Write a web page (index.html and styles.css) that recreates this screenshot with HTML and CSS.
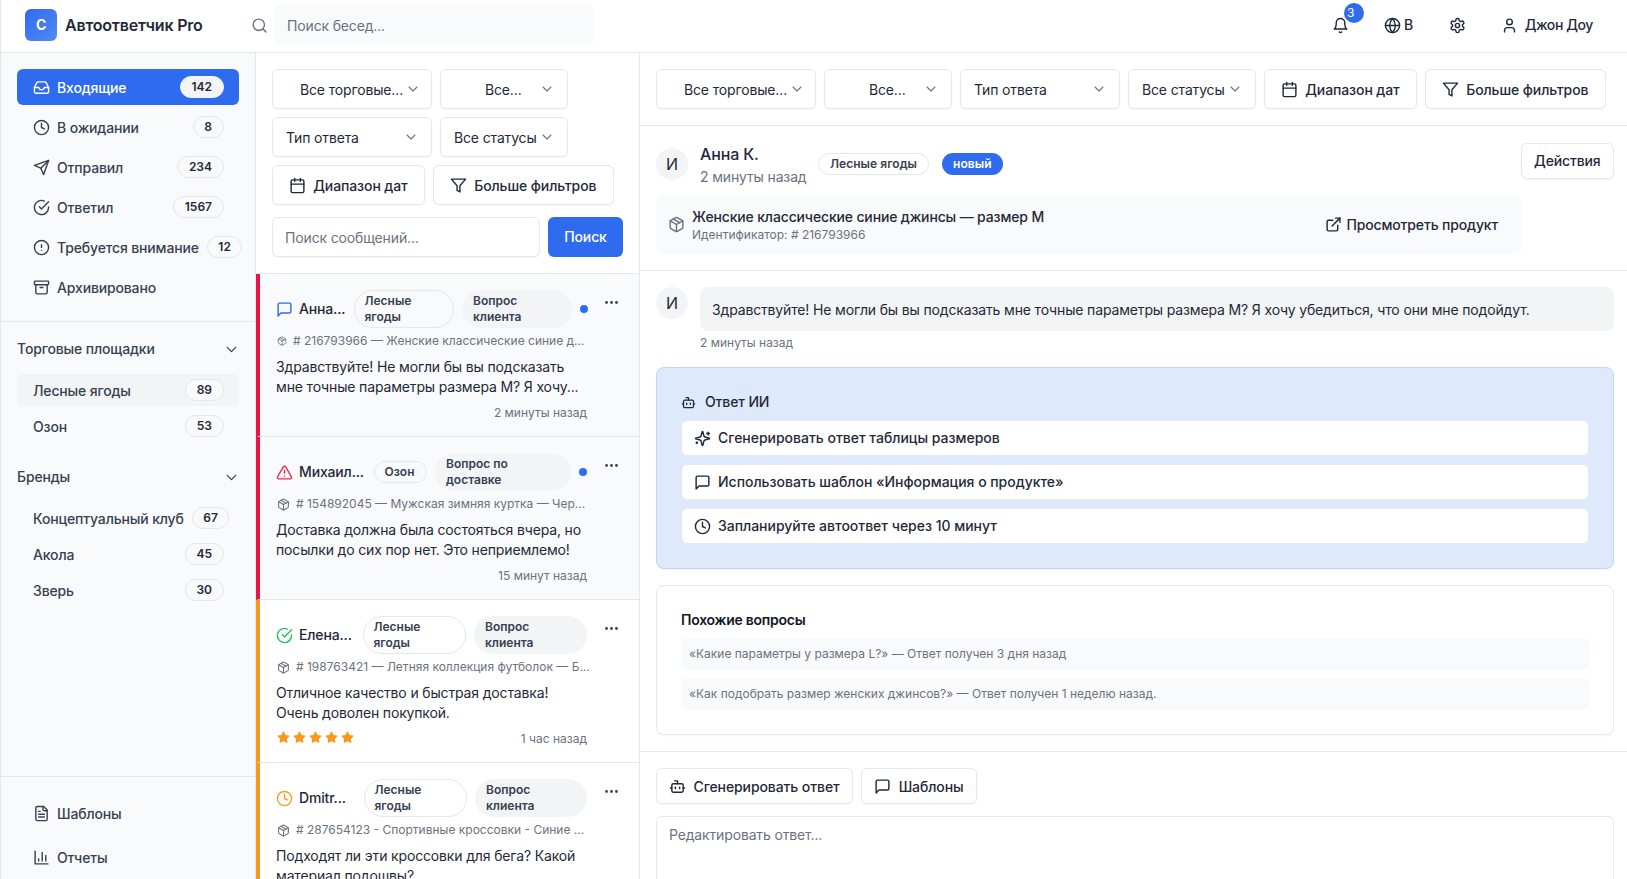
FILE: index.html
```html
<!DOCTYPE html>
<html lang="ru">
<head>
<meta charset="utf-8">
<title>Автоответчик Pro</title>
<link rel="stylesheet" href="styles.css">
</head>
<body>
<svg class="defs" xmlns="http://www.w3.org/2000/svg">
  <defs>
    <symbol id="i-inbox" viewBox="0 0 24 24"><polyline points="22 12 16 12 14 15 10 15 8 12 2 12"/><path d="M5.45 5.11 2 12v6a2 2 0 0 0 2 2h16a2 2 0 0 0 2-2v-6l-3.45-6.89A2 2 0 0 0 16.76 4H7.24a2 2 0 0 0-1.79 1.11z"/></symbol>
    <symbol id="i-clock" viewBox="0 0 24 24"><circle cx="12" cy="12" r="10"/><polyline points="12 6 12 12 16 14"/></symbol>
    <symbol id="i-send" viewBox="0 0 24 24"><path d="m22 2-7 20-4-9-9-4Z"/><path d="M22 2 11 13"/></symbol>
    <symbol id="i-check" viewBox="0 0 24 24"><path d="M22 11.08V12a10 10 0 1 1-5.93-9.14"/><path d="m9 11 3 3L22 4"/></symbol>
    <symbol id="i-alert" viewBox="0 0 24 24"><circle cx="12" cy="12" r="10"/><path d="M12 8v4"/><path d="M12 16h.01"/></symbol>
    <symbol id="i-archive" viewBox="0 0 24 24"><rect x="2" y="3" width="20" height="5" rx="1"/><path d="M4 8v11a2 2 0 0 0 2 2h12a2 2 0 0 0 2-2V8"/><path d="M10 12h4"/></symbol>
    <symbol id="i-search" viewBox="0 0 24 24"><circle cx="11" cy="11" r="8"/><path d="m21 21-4.3-4.3"/></symbol>
    <symbol id="i-bell" viewBox="0 0 24 24"><path d="M6 8a6 6 0 0 1 12 0c0 7 3 9 3 9H3s3-2 3-9"/><path d="M10.3 21a1.94 1.94 0 0 0 3.4 0"/></symbol>
    <symbol id="i-globe" viewBox="0 0 24 24"><circle cx="12" cy="12" r="10"/><path d="M12 2a14.5 14.5 0 0 0 0 20 14.5 14.5 0 0 0 0-20"/><path d="M2 12h20"/></symbol>
    <symbol id="i-gear" viewBox="0 0 24 24"><path d="M12.22 2h-.44a2 2 0 0 0-2 2v.18a2 2 0 0 1-1 1.73l-.43.25a2 2 0 0 1-2 0l-.15-.08a2 2 0 0 0-2.73.73l-.22.38a2 2 0 0 0 .73 2.73l.15.1a2 2 0 0 1 1 1.72v.51a2 2 0 0 1-1 1.74l-.15.09a2 2 0 0 0-.73 2.73l.22.38a2 2 0 0 0 2.73.73l.15-.08a2 2 0 0 1 2 0l.43.25a2 2 0 0 1 1 1.73V20a2 2 0 0 0 2 2h.44a2 2 0 0 0 2-2v-.18a2 2 0 0 1 1-1.73l.43-.25a2 2 0 0 1 2 0l.15.08a2 2 0 0 0 2.73-.73l.22-.39a2 2 0 0 0-.73-2.73l-.15-.08a2 2 0 0 1-1-1.74v-.5a2 2 0 0 1 1-1.74l.15-.09a2 2 0 0 0 .73-2.73l-.22-.38a2 2 0 0 0-2.73-.73l-.15.08a2 2 0 0 1-2 0l-.43-.25a2 2 0 0 1-1-1.73V4a2 2 0 0 0-2-2z"/><circle cx="12" cy="12" r="3"/></symbol>
    <symbol id="i-user" viewBox="0 0 24 24"><path d="M19 21v-2a4 4 0 0 0-4-4H9a4 4 0 0 0-4 4v2"/><circle cx="12" cy="7" r="4"/></symbol>
    <symbol id="i-cal" viewBox="0 0 24 24"><rect x="3" y="4" width="18" height="18" rx="2"/><path d="M16 2v4"/><path d="M8 2v4"/><path d="M3 10h18"/></symbol>
    <symbol id="i-filter" viewBox="0 0 24 24"><polygon points="22 3 2 3 10 12.46 10 19 14 21 14 12.46 22 3"/></symbol>
    <symbol id="i-chev" viewBox="0 0 24 24"><path d="m6 9 6 6 6-6"/></symbol>
    <symbol id="i-msg" viewBox="0 0 24 24"><path d="M21 15a2 2 0 0 1-2 2H7l-4 4V5a2 2 0 0 1 2-2h14a2 2 0 0 1 2 2z"/></symbol>
    <symbol id="i-tri" viewBox="0 0 24 24"><path d="m21.73 18-8-14a2 2 0 0 0-3.48 0l-8 14A2 2 0 0 0 4 21h16a2 2 0 0 0 1.73-3"/><path d="M12 9v4"/><path d="M12 17h.01"/></symbol>
    <symbol id="i-pkg" viewBox="0 0 24 24"><path d="m7.5 4.27 9 5.15"/><path d="M21 8a2 2 0 0 0-1-1.73l-7-4a2 2 0 0 0-2 0l-7 4A2 2 0 0 0 3 8v8a2 2 0 0 0 1 1.73l7 4a2 2 0 0 0 2 0l7-4A2 2 0 0 0 21 16Z"/><path d="m3.3 7 8.7 5 8.7-5"/><path d="M12 22V12"/></symbol>
    <symbol id="i-more" viewBox="0 0 24 24"><circle cx="12" cy="12" r="1"/><circle cx="19" cy="12" r="1"/><circle cx="5" cy="12" r="1"/></symbol>
    <symbol id="i-star" viewBox="0 0 24 24"><polygon points="12 2 15.09 8.26 22 9.27 17 14.14 18.18 21.02 12 17.77 5.82 21.02 7 14.14 2 9.27 8.91 8.26 12 2"/></symbol>
    <symbol id="i-file" viewBox="0 0 24 24"><path d="M15 2H6a2 2 0 0 0-2 2v16a2 2 0 0 0 2 2h12a2 2 0 0 0 2-2V7Z"/><path d="M14 2v4a2 2 0 0 0 2 2h4"/><path d="M10 9H8"/><path d="M16 13H8"/><path d="M16 17H8"/></symbol>
    <symbol id="i-chart" viewBox="0 0 24 24"><path d="M3 3v18h18"/><path d="M18 17V9"/><path d="M13 17V5"/><path d="M8 17v-3"/></symbol>
    <symbol id="i-ext" viewBox="0 0 24 24"><path d="M18 13v6a2 2 0 0 1-2 2H5a2 2 0 0 1-2-2V8a2 2 0 0 1 2-2h6"/><path d="M15 3h6v6"/><path d="M10 14 21 3"/></symbol>
    <symbol id="i-bot" viewBox="0 0 24 24"><path d="M12 8V4H8"/><rect x="4" y="8" width="16" height="12" rx="2"/><path d="M2 14h2"/><path d="M20 14h2"/><path d="M15 13v2"/><path d="M9 13v2"/></symbol>
    <symbol id="i-spark" viewBox="0 0 24 24"><path d="M9.937 15.5A2 2 0 0 0 8.5 14.063l-6.135-1.582a.5.5 0 0 1 0-.962L8.5 9.936A2 2 0 0 0 9.937 8.5l1.582-6.135a.5.5 0 0 1 .963 0L14.063 8.5A2 2 0 0 0 15.5 9.937l6.135 1.581a.5.5 0 0 1 0 .964L15.5 14.063a2 2 0 0 0-1.437 1.437l-1.582 6.135a.5.5 0 0 1-.963 0z"/><path d="M20 3v4"/><path d="M22 5h-4"/><path d="M4 17v2"/><path d="M5 18H3"/></symbol>
  </defs>
</svg>

<div class="app">
  <header class="topbar">
    <div class="brand">
      <div class="logo">C</div>
      <span class="brand-name">Автоответчик Pro</span>
    </div>
    <div class="top-search">
      <svg class="ico ico-muted"><use href="#i-search"/></svg>
      <input class="top-input" type="text" placeholder="Поиск бесед...">
    </div>
    <div class="top-actions">
      <div class="bell">
        <svg class="ico"><use href="#i-bell"/></svg>
        <span class="bell-count">3</span>
      </div>
      <div class="lang"><svg class="ico"><use href="#i-globe"/></svg><span>В</span></div>
      <svg class="ico gear"><use href="#i-gear"/></svg>
      <div class="me"><svg class="ico"><use href="#i-user"/></svg><span>Джон Доу</span></div>
    </div>
  </header>

  <div class="body">
    <aside class="sidebar">
      <nav class="nav">
        <a class="nav-item active"><svg class="ico"><use href="#i-inbox"/></svg><span class="nav-label">Входящие</span><span class="count count-solid">142</span></a>
        <a class="nav-item"><svg class="ico"><use href="#i-clock"/></svg><span class="nav-label">В ожидании</span><span class="count">8</span></a>
        <a class="nav-item"><svg class="ico"><use href="#i-send"/></svg><span class="nav-label">Отправил</span><span class="count">234</span></a>
        <a class="nav-item"><svg class="ico"><use href="#i-check"/></svg><span class="nav-label">Ответил</span><span class="count">1567</span></a>
        <a class="nav-item"><svg class="ico"><use href="#i-alert"/></svg><span class="nav-label">Требуется внимание</span><span class="count">12</span></a>
        <a class="nav-item"><svg class="ico"><use href="#i-archive"/></svg><span class="nav-label">Архивировано</span></a>
      </nav>

      <div class="groups">
        <div class="group">
          <div class="group-head"><span>Торговые площадки</span><svg class="ico chev-dark"><use href="#i-chev"/></svg></div>
          <a class="sub-item current"><span class="nav-label">Лесные ягоды</span><span class="count">89</span></a>
          <a class="sub-item"><span class="nav-label">Озон</span><span class="count">53</span></a>
        </div>
        <div class="group">
          <div class="group-head"><span>Бренды</span><svg class="ico chev-dark"><use href="#i-chev"/></svg></div>
          <a class="sub-item"><span class="nav-label">Концептуальный клуб</span><span class="count">67</span></a>
          <a class="sub-item"><span class="nav-label">Акола</span><span class="count">45</span></a>
          <a class="sub-item"><span class="nav-label">Зверь</span><span class="count">30</span></a>
        </div>
      </div>

      <div class="side-foot">
        <a class="nav-item"><svg class="ico"><use href="#i-file"/></svg><span class="nav-label">Шаблоны</span></a>
        <a class="nav-item"><svg class="ico"><use href="#i-chart"/></svg><span class="nav-label">Отчеты</span></a>
      </div>
    </aside>

    <section class="listcol">
      <div class="list-tools">
        <div class="filters">
          <div class="ctl sel w160 pad-a"><span>Все торговые...</span><svg class="chev"><use href="#i-chev"/></svg></div>
          <div class="ctl sel w128 pad-b"><span>Все...</span><svg class="chev"><use href="#i-chev"/></svg></div>
          <div class="ctl sel w160"><span>Тип ответа</span><svg class="chev"><use href="#i-chev"/></svg></div>
          <div class="ctl sel w128"><span>Все статусы</span><svg class="chev"><use href="#i-chev"/></svg></div>
          <div class="ctl btn"><svg class="ico"><use href="#i-cal"/></svg><span>Диапазон дат</span></div>
          <div class="ctl btn"><svg class="ico"><use href="#i-filter"/></svg><span>Больше фильтров</span></div>
        </div>
        <div class="msg-search">
          <input class="ctl msg-input" type="text" placeholder="Поиск сообщений...">
          <button class="search-btn" type="button">Поиск</button>
        </div>
      </div>

      <div class="cards">
        <article class="card urgent tinted">
          <div class="card-main">
            <div class="card-top">
              <svg class="ico ico-blue"><use href="#i-msg"/></svg>
              <span class="who n47">Анна...</span>
              <span class="tag tag-line b100">Лесные ягоды</span>
              <span class="tag tag-soft b110">Вопрос клиента</span>
              <span class="dot"></span>
            </div>
            <div class="prod"><svg class="ico-xs tiny"><use href="#i-pkg"/></svg><span class="prod-text"># 216793966 — Женские классические синие д...</span></div>
            <p class="text">Здравствуйте! Не могли бы вы подсказать мне точные параметры размера М? Я хочу...</p>
            <div class="card-foot"><span class="ago">2 минуты назад</span></div>
          </div>
          <button class="more" type="button" aria-label="Ещё"><svg class="ico"><use href="#i-more"/></svg></button>
        </article>

        <article class="card urgent tinted">
          <div class="card-main">
            <div class="card-top">
              <svg class="ico ico-red"><use href="#i-tri"/></svg>
              <span class="who n67">Михаил...</span>
              <span class="tag tag-line b53">Озон</span>
              <span class="tag tag-soft b136">Вопрос по доставке</span>
              <span class="dot"></span>
            </div>
            <div class="prod"><svg class="ico-xs"><use href="#i-pkg"/></svg><span class="prod-text"># 154892045 — Мужская зимняя куртка — Чер...</span></div>
            <p class="text">Доставка должна была состояться вчера, но посылки до сих пор нет. Это неприемлемо!</p>
            <div class="card-foot"><span class="ago">15 минут назад</span></div>
          </div>
          <button class="more" type="button" aria-label="Ещё"><svg class="ico"><use href="#i-more"/></svg></button>
        </article>

        <article class="card warn">
          <div class="card-main">
            <div class="card-top">
              <svg class="ico ico-green"><use href="#i-check"/></svg>
              <span class="who n56">Елена...</span>
              <span class="tag tag-line b103">Лесные ягоды</span>
              <span class="tag tag-soft b113">Вопрос клиента</span>
            </div>
            <div class="prod"><svg class="ico-xs"><use href="#i-pkg"/></svg><span class="prod-text"># 198763421 — Летняя коллекция футболок — Б...</span></div>
            <p class="text">Отличное качество и быстрая доставка!<br>Очень доволен покупкой.</p>
            <div class="card-foot">
              <div class="stars">
                <svg class="star"><use href="#i-star"/></svg><svg class="star"><use href="#i-star"/></svg><svg class="star"><use href="#i-star"/></svg><svg class="star"><use href="#i-star"/></svg><svg class="star"><use href="#i-star"/></svg>
              </div>
              <span class="ago">1 час назад</span>
            </div>
          </div>
          <button class="more" type="button" aria-label="Ещё"><svg class="ico"><use href="#i-more"/></svg></button>
        </article>

        <article class="card warn">
          <div class="card-main">
            <div class="card-top">
              <svg class="ico ico-orange"><use href="#i-clock"/></svg>
              <span class="who n57">Dmitr...</span>
              <span class="tag tag-line b103">Лесные ягоды</span>
              <span class="tag tag-soft b112">Вопрос клиента</span>
            </div>
            <div class="prod"><svg class="ico-xs"><use href="#i-pkg"/></svg><span class="prod-text"># 287654123 - Спортивные кроссовки - Синие ...</span></div>
            <p class="text">Подходят ли эти кроссовки для бега? Какой материал подошвы?</p>
          </div>
          <button class="more" type="button" aria-label="Ещё"><svg class="ico"><use href="#i-more"/></svg></button>
        </article>
      </div>
    </section>

    <main class="detail">
      <div class="detail-filters">
        <div class="ctl sel w160 pad-a"><span>Все торговые...</span><svg class="chev"><use href="#i-chev"/></svg></div>
        <div class="ctl sel w128 pad-b"><span>Все...</span><svg class="chev"><use href="#i-chev"/></svg></div>
        <div class="ctl sel w160"><span>Тип ответа</span><svg class="chev"><use href="#i-chev"/></svg></div>
        <div class="ctl sel w128"><span>Все статусы</span><svg class="chev"><use href="#i-chev"/></svg></div>
        <div class="ctl btn"><svg class="ico"><use href="#i-cal"/></svg><span>Диапазон дат</span></div>
        <div class="ctl btn"><svg class="ico"><use href="#i-filter"/></svg><span>Больше фильтров</span></div>
      </div>

      <div class="convo-head">
        <div class="convo-top">
          <div class="avatar">И</div>
          <div class="convo-who">
            <div class="convo-name">Анна К.</div>
            <div class="convo-ago">2 минуты назад</div>
          </div>
          <span class="tag tag-line">Лесные ягоды</span>
          <span class="tag tag-blue">новый</span>
          <button class="ctl action" type="button">Действия</button>
        </div>
        <div class="product">
          <svg class="ico ico-gray"><use href="#i-pkg"/></svg>
          <div class="product-info">
            <div class="product-name">Женские классические синие джинсы — размер М</div>
            <div class="product-id">Идентификатор: # 216793966</div>
          </div>
          <a class="product-link"><svg class="ico"><use href="#i-ext"/></svg><span>Просмотреть продукт</span></a>
        </div>
      </div>

      <div class="thread">
        <div class="message">
          <div class="avatar">И</div>
          <div class="message-body">
            <div class="bubble">Здравствуйте! Не могли бы вы подсказать мне точные параметры размера М? Я хочу убедиться, что они мне подойдут.</div>
            <div class="message-ago">2 минуты назад</div>
          </div>
        </div>

        <div class="panel panel-ai">
          <div class="panel-title"><svg class="ico ico-14"><use href="#i-bot"/></svg><span>Ответ ИИ</span></div>
          <button class="ai-opt" type="button"><svg class="ico"><use href="#i-spark"/></svg><span>Сгенерировать ответ таблицы размеров</span></button>
          <button class="ai-opt" type="button"><svg class="ico"><use href="#i-msg"/></svg><span>Использовать шаблон «Информация о продукте»</span></button>
          <button class="ai-opt" type="button"><svg class="ico"><use href="#i-clock"/></svg><span>Запланируйте автоответ через 10 минут</span></button>
        </div>

        <div class="panel panel-similar">
          <div class="panel-title strong"><span>Похожие вопросы</span></div>
          <div class="similar">«Какие параметры у размера L?» — Ответ получен 3 дня назад</div>
          <div class="similar">«Как подобрать размер женских джинсов?» — Ответ получен 1 неделю назад.</div>
        </div>
      </div>

      <div class="composer">
        <div class="composer-btns">
          <button class="ctl btn" type="button"><svg class="ico"><use href="#i-bot"/></svg><span>Сгенерировать ответ</span></button>
          <button class="ctl btn" type="button"><svg class="ico"><use href="#i-msg"/></svg><span>Шаблоны</span></button>
        </div>
        <textarea class="reply" placeholder="Редактировать ответ..."></textarea>
      </div>
    </main>
  </div>
</div>
</body>
</html>
```
FILE: styles.css
```css
* { box-sizing: border-box; }
html, body { margin: 0; height: 100%; overflow: hidden; }
body {
  font-family: Inter, "Noto Sans", sans-serif;
  font-size: 14px;
  line-height: 20px;
  letter-spacing: -0.15px;
  color: #1f2937;
  background: #fff;
}
.defs { position: absolute; width: 0; height: 0; }
button, input, textarea { font: inherit; color: inherit; letter-spacing: inherit; }
p { margin: 0; }

.ico {
  width: 17px; height: 17px; margin: 0 -0.5px; flex: none;
  fill: none; stroke: currentColor; stroke-width: 2; stroke-linecap: round; stroke-linejoin: round;
}
.ico-14 { width: 15px; height: 15px; margin: 0 1px 0 0; }
.ico-muted { color: #6b7280; }
.ico-gray { color: #6b7280; }
.ico-blue { color: #2f6bef; }
.ico-red { color: #ef2b4f; }
.ico-green { color: #22c55e; }
.ico-orange { color: #f59e2b; }

.app { height: 100vh; display: flex; flex-direction: column; border-left: 1px solid #e5e7eb; }

/* top bar */
.topbar {
  height: 53px; flex: none; display: flex; align-items: center;
  border-bottom: 1px solid #e5e7eb; padding: 0 34px 2px 24px; background: #fff;
}
.brand { display: flex; align-items: center; gap: 8px; width: 226px; flex: none; }
.logo {
  width: 32px; height: 32px; border-radius: 6px; color: #fff; font-weight: 700; font-size: 14px;
  display: flex; align-items: center; justify-content: center;
  background: linear-gradient(135deg, #2f6bef, #5389f3);
}
.brand-name { font-size: 16px; font-weight: 600; color: #1f2937; letter-spacing: -0.2px; }
.top-search { display: flex; align-items: center; gap: 8px; width: 343px; flex: none; }
.top-input {
  flex: 1; min-width: 0; height: 40px; border: 0; border-radius: 6px; background: #f9fafb;
  padding: 0 12px; outline: none;
}
.top-input::placeholder, .msg-input::placeholder, .reply::placeholder { color: #6b7280; opacity: 1; }
.top-actions { margin-left: auto; display: flex; align-items: center; }
.bell { position: relative; display: flex; margin-right: 36px; }
.bell-count {
  position: absolute; left: 12px; top: -14px; width: 20px; height: 20px; border-radius: 50%;
  background: #2f6bef; color: #fff; font-size: 12px; line-height: 20px; padding-left: 3px; letter-spacing: 0;
}
.lang { display: flex; align-items: center; gap: 4px; font-weight: 500; margin-right: 36px; }
.gear { margin-right: 36px; }
.me { display: flex; align-items: center; gap: 7px; font-weight: 500; letter-spacing: -0.4px; }

.body { flex: 1; min-height: 0; display: flex; }

/* sidebar */
.sidebar {
  width: 255px; flex: none; display: flex; flex-direction: column;
  background: #f9fafb; border-right: 1px solid #e5e7eb; overflow: hidden;
}
.nav {
  display: flex; flex-direction: column; gap: 4px; padding: 16px;
  border-bottom: 1px solid #e5e7eb;
}
.nav-item {
  height: 36px; flex: none; display: flex; align-items: center; gap: 8px; padding: 0 15.5px 0 16px;
  border-radius: 6px; color: #374151; font-weight: 500; white-space: nowrap;
}
.nav-item.active { background: #2f6bef; color: #fff; }
.nav-label { flex: 1 0 auto; padding-top: 1px; }
.count {
  height: 22px; flex: none; display: inline-flex; align-items: center; padding: 0 10.5px;
  border: 1px solid #e5e7eb; border-radius: 11px; font-size: 12px; font-weight: 600; color: #1f2937;
  background: #f9fafb; letter-spacing: 0;
}
.count-solid { background: #f3f4f6; border-color: #f3f4f6; }
.groups { flex: 1; display: flex; flex-direction: column; gap: 24px; padding: 16px 16px 0; }
.group-head {
  height: 22px; display: flex; align-items: center; justify-content: space-between;
  margin-bottom: 14px; font-weight: 500; color: #374151;
}
.chev-dark { stroke-width: 1.75; }
.sub-item {
  height: 32px; display: flex; align-items: center; gap: 8px; padding: 0 15.5px 0 16px; border-radius: 6px;
  color: #374151; font-weight: 500; white-space: nowrap;
}
.sub-item + .sub-item { margin-top: 4px; }
.sub-item.current { background: #f3f4f6; }
.side-foot {
  flex: none; height: 103px; display: flex; flex-direction: column; gap: 8px;
  padding: 18px 16px 0; border-top: 1px solid #e5e7eb;
}

/* list column */
.listcol {
  width: 384px; flex: none; display: flex; flex-direction: column;
  border-right: 1px solid #e5e7eb; overflow: hidden;
}
.list-tools { padding: 16px 0 16px 16px; border-bottom: 1px solid #e5e7eb; }
.filters { display: flex; flex-wrap: wrap; gap: 8px; }
.ctl {
  height: 40px; display: flex; align-items: center; background: #fff;
  border: 1px solid #e5e7eb; border-radius: 6px; box-shadow: 0 1px 2px rgba(0,0,0,.04);
  font-weight: 500; color: #1f2937;
}
.ctl > span { padding-top: 1px; }
.sel { justify-content: space-between; padding: 0 12px 0 13px; font-weight: 400; white-space: nowrap; }
.sel.pad-a { padding: 0 10px 0 27px; }
.sel.pad-b { padding-left: 44px; }
.w160 { width: 160px; }
.w128 { width: 128px; }
.chev {
  width: 16px; height: 16px; flex: none; fill: none; stroke: #6b7280; stroke-width: 1.6;
  stroke-linecap: round; stroke-linejoin: round;
}
.btn { padding: 0 16.25px; gap: 8px; white-space: nowrap; letter-spacing: -0.1px; }
.msg-search { display: flex; gap: 8px; margin-top: 12px; padding-right: 16px; }
.msg-input { flex: 1; min-width: 0; padding: 0 12px; font-weight: 400; outline: none; }
.search-btn {
  width: 75px; height: 40px; border: 0; border-radius: 6px; background: #2f6bef; color: #fff; font-weight: 500;
}

.cards { flex: 1; min-height: 0; overflow: hidden; }
.card {
  height: 163px; display: flex; align-items: flex-start; gap: 8px;
  padding: 16px 13px 0 16px; border-left: 4px solid #e11d48; border-bottom: 1px solid #e5e7eb;
}
.card.urgent { border-left-color: #eb1244; }
.card.warn { border-left-color: #f7981d; }
.card.tinted { background: #f9fafb; }
.card-main { width: 311px; flex: none; }
.card-top { min-height: 38px; display: flex; align-items: center; gap: 8px; }
.who { font-weight: 500; white-space: nowrap; margin-left: -1px; color: #1f2937; flex: none; }
.n47 { width: 47px; }
.n56 { width: 56px; }
.n57 { width: 57px; }
.n67 { width: 67px; }
.tag {
  display: inline-flex; align-items: center; padding: 2px 10px; border-radius: 999px;
  font-size: 12px; line-height: 16px; font-weight: 600; border: 1px solid transparent; flex: none; letter-spacing: 0;
}
.tag-line { border-color: #e5e7eb; background: #fff; color: #374151; }
.tag-soft { background: #f3f4f6; color: #374151; }
.tag-blue { background: #2f6bef; color: #fff; }
.card .tag-line { background: transparent; padding-left: 9.5px; }
.b53 { width: 53px; }
.b100 { width: 100px; }
.b103 { width: 103px; }
.b110 { width: 110px; }
.b112 { width: 112px; }
.b113 { width: 113px; }
.b136 { width: 136px; }
.dot { width: 8px; height: 8px; border-radius: 50%; background: #2f6bef; flex: none; }
.prod {
  display: flex; align-items: center; gap: 6px; margin-top: 5px; font-size: 12px; line-height: 16px; color: #6b7280;
  white-space: nowrap; letter-spacing: 0;
}
.ico-xs {
  width: 13px; height: 13px; flex: none; fill: none; stroke: currentColor; stroke-width: 2;
  stroke-linecap: round; stroke-linejoin: round; margin-left: 1px;
}
.ico-xs.tiny { width: 10px; height: 10px; }
.text { margin-top: 8px; width: 311px; color: #1f2937; }
.card-foot { display: flex; align-items: center; justify-content: flex-end; margin-top: 8px; height: 16px; }
.ago { font-size: 12px; line-height: 16px; color: #6b7280; letter-spacing: 0; }
.stars { display: flex; gap: 3px; margin: -3px auto 0 1px; }
.star { width: 13px; height: 13px; fill: #f7981d; stroke: #f7981d; stroke-width: 2; stroke-linejoin: round; }
.more {
  width: 32px; height: 24px; flex: none; padding: 0; border: 0; background: transparent; color: #374151;
  display: flex; align-items: center; justify-content: center;
}

/* detail */
.detail { flex: 1; min-width: 0; display: flex; flex-direction: column; overflow: hidden; }
.detail-filters {
  flex: none; display: flex; gap: 8px; padding: 16px 13px 16px 16px; border-bottom: 1px solid #e5e7eb;
}
.convo-head { flex: none; padding: 16px 13px 16px 16px; height: 145px; border-bottom: 1px solid #e5e7eb; }
.convo-top { display: flex; align-items: center; height: 44px; margin-bottom: 9px; }
.avatar {
  width: 32px; height: 32px; flex: none; border-radius: 50%; background: #f3f4f6; color: #1f2937;
  display: flex; align-items: center; justify-content: center; font-size: 16px;
}
.convo-who { margin-left: 12px; margin-right: 12px; }
.convo-name { font-size: 16px; line-height: 24px; font-weight: 500; color: #1f2937; }
.convo-ago { color: #6b7280; line-height: 20px; margin-top: 1px; }
.convo-top .tag { padding: 2px 10.5px; letter-spacing: 0.05px; }
.convo-top .tag + .tag { margin-left: 13px; }
.action { height: 36px; margin: 1px 0 0 auto; align-self: flex-start; padding: 0 12.5px; }
.product {
  width: 866px; height: 59px; display: flex; align-items: center; gap: 8px;
  padding: 0 24px 0 12px; background: #f9fafb; border-radius: 8px;
}
.product-info { flex: 1; }
.product-name { font-weight: 500; color: #1f2937; line-height: 20px; }
.product-id { font-size: 12px; line-height: 16px; color: #6b7280; letter-spacing: 0; }
.product-link { display: flex; align-items: center; gap: 4.5px; font-weight: 500; color: #1f2937; }

.thread { flex: none; padding: 16px 13px 16px 16px; border-bottom: 1px solid #e5e7eb; }
.message { display: flex; gap: 12px; align-items: flex-start; }
.message-body { flex: 1; }
.bubble { height: 44px; padding: 13px 12px 11px; border-radius: 8px; background: #f3f4f6; }
.message-ago { margin-top: 4px; font-size: 12px; line-height: 16px; color: #6b7280; letter-spacing: 0; }
.panel { border: 1px solid #e5e7eb; border-radius: 8px; padding: 24px; margin-top: 16px; box-shadow: 0 1px 2px rgba(0,0,0,.04); }
.panel-ai { background: #dfe9fc; border-color: #bfd5f8; }
.panel-title { display: flex; align-items: center; gap: 8px; font-weight: 500; color: #1f2937; margin-bottom: 8px; }
.panel-title.strong { font-weight: 600; color: #111827; letter-spacing: -0.25px; }
.ai-opt {
  width: 100%; height: 36px; display: flex; align-items: center; gap: 8px; padding: 0 12px;
  background: #fff; border: 1px solid #e5e7eb; border-radius: 6px; font-weight: 500; color: #1f2937;
  letter-spacing: -0.02px;
}
.ai-opt + .ai-opt { margin-top: 8px; }
.similar { height: 32px; padding: 8px; background: #f9fafb; border-radius: 6px; font-size: 12px; line-height: 16px; color: #6b7280; letter-spacing: 0; }
.similar + .similar { margin-top: 8px; }

.composer { flex: none; padding: 16px 13px 0 16px; }
.composer-btns { display: flex; gap: 8px; }
.composer-btns .btn { height: 36px; padding: 0 12.5px; }
.reply {
  display: block; width: 100%; height: 120px; margin-top: 12px; padding: 8px 12px; resize: none; outline: none;
  border: 1px solid #e5e7eb; border-radius: 6px; background: #fff;
}
```
